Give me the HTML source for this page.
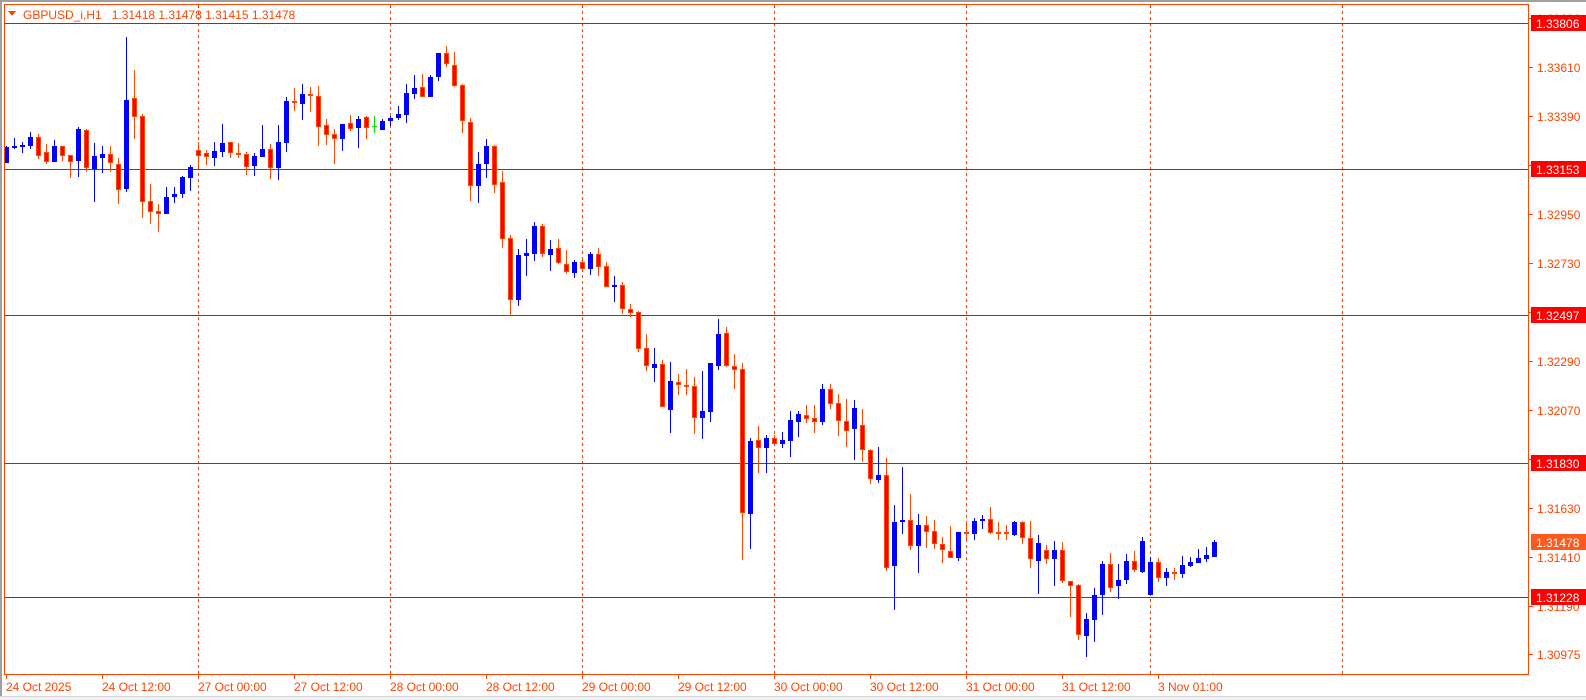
<!DOCTYPE html>
<html><head><meta charset="utf-8"><style>
html,body{margin:0;padding:0;background:#fff;width:1586px;height:700px;overflow:hidden}
svg{display:block}
text{font-family:"Liberation Sans",sans-serif;font-size:12px;white-space:pre}
</style></head><body>
<svg id="c" width="1586" height="700" xmlns="http://www.w3.org/2000/svg" shape-rendering="crispEdges">
<rect x="0" y="0" width="1586" height="700" fill="#fff"/>
<rect x="0" y="0" width="1586" height="2" fill="#a0a0a0"/>
<rect x="0" y="0" width="2" height="700" fill="#a0a0a0"/>
<rect x="0" y="696" width="1586" height="4" fill="#f0f0f0"/>
<rect x="0" y="696" width="1586" height="1" fill="#d8d8d8"/>
<g id="grid"></g>
<g id="hl"></g>
<g id="cand"></g>
<rect x="4.5" y="4.5" width="1524" height="670" fill="none" stroke="#ff4500" stroke-width="1"/>
<g id="axis"></g>
<polygon points="8,11 16,11 12,16" fill="#ff4500"/>
<text x="23" y="19" fill="#ff4500" xml:space="preserve">GBPUSD_i,H1   1.31418 1.31478 1.31415 1.31478</text>
</svg>
<script>
var NS="http://www.w3.org/2000/svg";
function el(p,t,a,txt){var e=document.createElementNS(NS,t);for(var k in a)e.setAttribute(k,a[k]);if(txt!==undefined)e.textContent=txt;document.getElementById(p).appendChild(e);return e;}
function Y(p){return 67+(1.33610-p)*22270;}
[198,390,582,774,966,1150,1342].forEach(function(x){el("grid","line",{x1:x+.5,y1:5,x2:x+.5,y2:674,stroke:"#ff4500","stroke-dasharray":"3,3"});});
[1.33806,1.33153,1.32497,1.31830,1.31228].forEach(function(p){var y=Math.round(Y(p))+.5;el("hl","line",{x1:5,y1:y,x2:1529,y2:y,stroke:"#ff0000"});});
var ticks=[["1.33830",1.3383],["1.33610",1.3361],["1.33390",1.3339],["1.33170",1.3317],["1.32950",1.3295],["1.32730",1.3273],["1.32510",1.3251],["1.32290",1.3229],["1.32070",1.3207],["1.31850",1.3185],["1.31630",1.3163],["1.31410",1.3141],["1.31190",1.3119],["1.30975",1.30975]];
ticks.forEach(function(t){var y=Math.round(Y(t[1]));el("axis","line",{x1:1529,y1:y+.5,x2:1533,y2:y+.5,stroke:"#ff4500"});el("axis","text",{x:1537,y:y+5,fill:"#ff4500"},t[0]);});
[["1.33806",1.33806,"#ff0000"],["1.33153",1.33153,"#ff0000"],["1.32497",1.32497,"#ff0000"],["1.31830",1.31830,"#ff0000"],["1.31478",1.31478,"#ff5a1e"],["1.31228",1.31228,"#ff0000"]].forEach(function(t){var y=Math.round(Y(t[1]));el("axis","rect",{x:1531,y:y-8,width:55,height:16,fill:t[2]});el("axis","text",{x:1536,y:y+5,fill:"#fff"},t[0]);});
var d=["24 Oct 2025","24 Oct 12:00","27 Oct 00:00","27 Oct 12:00","28 Oct 00:00","28 Oct 12:00","29 Oct 00:00","29 Oct 12:00","30 Oct 00:00","30 Oct 12:00","31 Oct 00:00","31 Oct 12:00","3 Nov 01:00"];
d.forEach(function(s,i){var x=6+96*i;el("axis","line",{x1:x+.5,y1:675,x2:x+.5,y2:679,stroke:"#ff4500"});el("axis","text",{x:x,y:691,fill:"#ff4500"},s);});
var D=[[163,147,146,163],[148,146,138,149],[147,145,142,153],[146,137,132,149],[137,156,134,159],[152,162,144,164],[162,146,140,162],[146,156,146,161],[155,162,155,178],[161,129,127,177],[130,168,129,172],[169,156,143,202],[158,154,146,173],[154,163,146,172],[164,190,158,204],[189,100,37,192],[98,117,70,139],[116,202,114,218],[201,212,184,224],[211,214,204,232],[214,197,187,214],[197,194,187,203],[194,177,176,198],[178,167,165,191],[150,156,142,168],[153,157,150,165],[158,151,142,166],[152,143,124,157],[142,153,142,158],[153,155,143,158],[154,167,152,175],[166,156,153,176],[157,149,125,157],[149,168,144,179],[168,142,125,180],[143,101,97,152],[101,103,88,111],[104,94,84,120],[94,96,87,112],[96,127,86,146],[125,135,119,145],[134,139,129,164],[139,124,124,151],[123,129,115,131],[128,119,116,148],[117,128,116,139],[126,126,116,133,1],[130,121,119,130],[121,118,116,126],[118,114,106,120],[115,93,84,123],[94,88,75,99],[87,97,74,97],[97,77,75,97],[77,53,53,81],[53,64,46,67],[65,86,52,87],[85,121,84,133],[122,186,118,201],[186,164,152,203],[164,146,139,178],[146,185,145,193],[182,239,171,248],[238,300,235,316],[300,255,249,306],[256,253,239,276],[254,226,222,261],[226,254,224,257],[255,249,240,271],[248,263,239,264],[264,272,250,274],[273,262,260,278],[262,269,260,269],[269,254,252,275],[254,267,248,276],[266,287,262,287],[287,285,276,302],[285,309,282,314],[309,313,304,317],[312,349,311,352],[348,366,334,371],[368,364,348,382],[364,407,360,407],[410,381,362,433],[382,385,374,395],[385,387,369,395],[386,418,377,434],[418,411,371,439],[412,363,363,422],[366,334,319,370],[333,366,327,367],[366,370,354,389],[369,513,363,560],[514,441,438,549],[440,448,426,473],[448,438,435,473],[438,444,435,444],[444,440,432,448],[441,420,411,457],[422,414,411,437],[415,419,405,423],[418,422,405,433],[422,389,384,425],[389,404,384,409],[403,421,394,436],[421,431,399,447],[429,408,400,460],[425,450,409,462],[450,479,449,484],[480,475,447,483],[475,568,458,571],[566,522,505,610],[522,520,467,534],[520,546,494,550],[546,525,514,573],[525,532,516,548],[531,544,520,549],[544,550,537,563],[551,558,526,558],[558,532,532,561],[532,532,522,540,2],[534,521,518,540],[521,519,515,529],[519,533,507,534],[532,534,522,540],[532,534,525,540],[535,522,521,536],[522,538,521,544],[538,559,521,568],[561,543,535,594],[550,559,545,564],[559,550,541,586],[550,581,542,583],[581,586,581,617],[585,635,584,640],[636,619,613,657],[620,595,588,642],[595,564,561,615],[564,588,553,592],[586,580,564,599],[580,561,554,584],[561,570,551,572],[572,541,537,573],[595,562,557,595],[562,578,558,582],[578,572,568,586],[572,574,568,580],[574,565,556,578],[566,562,557,567],[563,558,549,563],[559,555,547,562],[557,542,540,557]];
D.forEach(function(c,i){var x=6+8*i;var o=c[0],cl=c[1],h=c[2],l=c[3];
 if(c[4]===1){el("cand","line",{x1:x+.5,y1:h,x2:x+.5,y2:l,stroke:"#00e000"});el("cand","line",{x1:x-2,y1:o+.5,x2:x+3,y2:o+.5,stroke:"#00e000"});return;}
 var bull=cl<o&&!c[4];var col=bull?"#0000ff":"#ff4500";
 el("cand","line",{x1:x+.5,y1:h,x2:x+.5,y2:l,stroke:col});
 var top=Math.min(o,cl),bot=Math.max(o,cl);
 if(bot-top<2){el("cand","rect",{x:x-2,y:top,width:5,height:2,fill:col});return;}
 if(bull)el("cand","rect",{x:x-2,y:top,width:5,height:bot-top,fill:"#0000ff"});
 else el("cand","rect",{x:x-1.5,y:top+.5,width:4,height:bot-top-1,fill:"#ff0000",stroke:"#ff4500"});
});
</script>
</body></html>
